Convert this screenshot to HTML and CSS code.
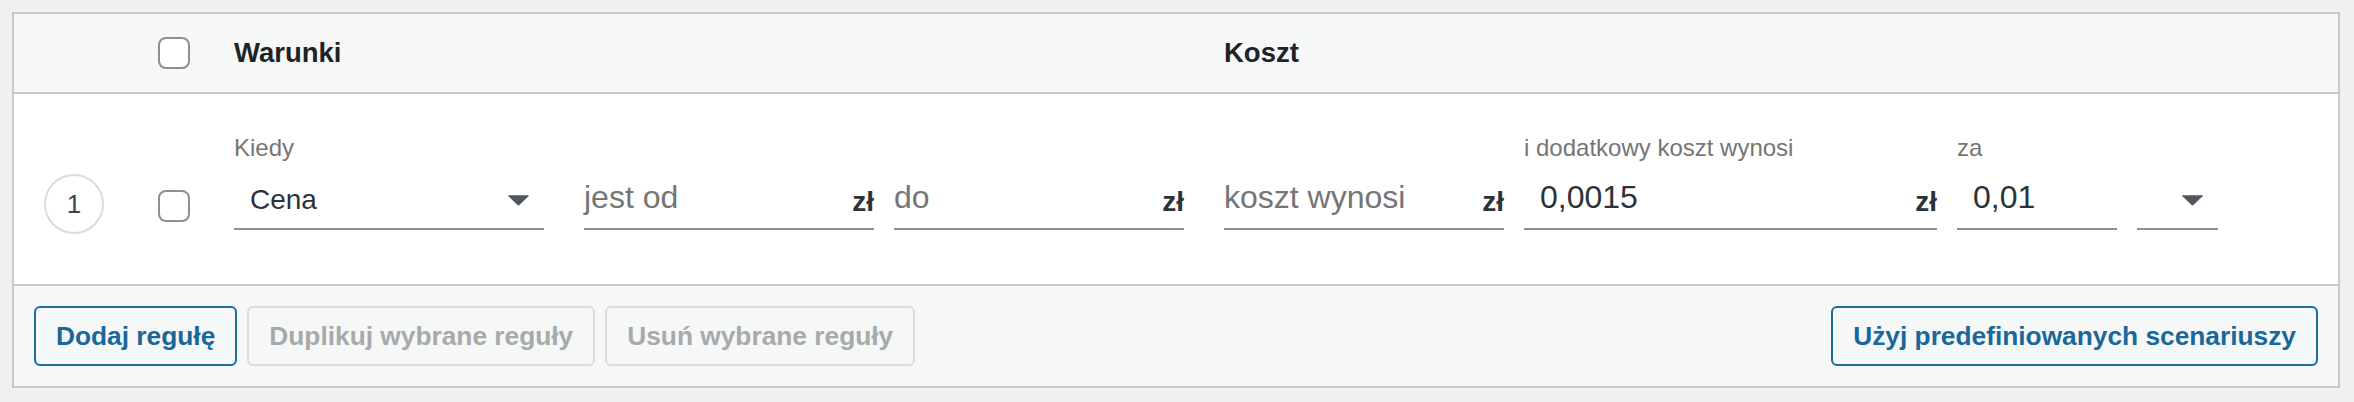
FILE: index.html
```html
<!DOCTYPE html>
<html lang="pl">
<head>
<meta charset="utf-8">
<title>Reguły</title>
<link rel="stylesheet" href="styles.css">
</head>
<body>
<div class="rules">
  <div class="thead">
    <div class="col-num"></div>
    <div class="col-check"><span class="checkbox"></span></div>
    <div class="th th-cond">Warunki</div>
    <div class="th">Koszt</div>
  </div>
  <div class="row">
    <div class="col-num"><span class="num">1</span></div>
    <div class="col-check"><span class="checkbox checkbox-row"></span></div>
    <div class="group group-cond">
      <div class="field w-310">
        <div class="field-label">Kiedy</div>
        <div class="control select"><span>Cena</span><svg class="arrow" width="23" height="12" viewBox="0 0 23 12"><path d="M2 1.2 H21 Q22.4 1.2 21.6 2.3 L12.4 11 Q11.5 11.8 10.6 11 L1.4 2.3 Q0.6 1.2 2 1.2 Z"/></svg></div>
      </div>
      <div class="group">
        <div class="field w-290">
          <div class="field-label"></div>
          <div class="control input"><span class="placeholder">jest od</span><span class="suffix">zł</span></div>
        </div>
        <div class="field w-290">
          <div class="field-label"></div>
          <div class="control input"><span class="placeholder">do</span><span class="suffix">zł</span></div>
        </div>
      </div>
    </div>
    <div class="group group-cost">
      <div class="field w-280">
        <div class="field-label"></div>
        <div class="control input"><span class="placeholder">koszt wynosi</span><span class="suffix">zł</span></div>
      </div>
      <div class="field w-413">
        <div class="field-label">i dodatkowy koszt wynosi</div>
        <div class="control input"><span class="value">0,0015</span><span class="suffix">zł</span></div>
      </div>
      <div class="field w-160">
        <div class="field-label">za</div>
        <div class="control input"><span class="value">0,01</span></div>
      </div>
      <div class="field w-81">
        <div class="field-label"></div>
        <div class="control select select-empty"><svg class="arrow" width="23" height="12" viewBox="0 0 23 12"><path d="M2 1.2 H21 Q22.4 1.2 21.6 2.3 L12.4 11 Q11.5 11.8 10.6 11 L1.4 2.3 Q0.6 1.2 2 1.2 Z"/></svg></div>
      </div>
    </div>
  </div>
  <div class="tfoot">
    <button class="btn btn-active" type="button">Dodaj regułę</button>
    <button class="btn" type="button" disabled>Duplikuj wybrane reguły</button>
    <button class="btn" type="button" disabled>Usuń wybrane reguły</button>
    <button class="btn btn-active btn-right" type="button">Użyj predefiniowanych scenariuszy</button>
  </div>
</div>
</body>
</html>
```
FILE: styles.css
```css
html, body {
  margin: 0;
  padding: 0;
}
body {
  background: #f0f0f1;
  font-family: "Liberation Sans", Arial, sans-serif;
  color: #2c3338;
}
.rules {
  margin: 12px 0 0 12px;
  width: 2328px;
  box-sizing: border-box;
  border: 2px solid #c8cbcd;
  background: #fff;
}
.thead {
  display: flex;
  align-items: center;
  height: 80px;
  box-sizing: border-box;
  background: #f6f7f7;
  border-bottom: 2px solid #c8cbcd;
}
.col-num {
  flex: none;
  width: 144px;
  box-sizing: border-box;
  padding-left: 30px;
}
.col-check {
  flex: none;
  width: 76px;
}
.checkbox {
  display: block;
  width: 32px;
  height: 32px;
  box-sizing: border-box;
  border: 2px solid #8c8f94;
  border-radius: 8px;
  background: #fff;
}
.th {
  font-size: 27.5px;
  font-weight: 700;
  color: #1d2327;
}
.th-cond {
  flex: none;
  width: 990px;
}
.row {
  display: flex;
  align-items: flex-start;
  height: 190px;
  box-sizing: border-box;
  padding: 38px 0 0;
  overflow: hidden;
}
.num {
  display: flex;
  align-items: center;
  justify-content: center;
  width: 60px;
  height: 60px;
  margin-top: 42px;
  box-sizing: border-box;
  border: 2px solid #dcdcde;
  border-radius: 50%;
  font-size: 26px;
  color: #3c434a;
}
.checkbox-row {
  margin-top: 58px;
}
.group {
  display: flex;
  gap: 20px;
}
.group-cond {
  gap: 40px;
}
.group-cost {
  margin-left: 40px;
}
.field {
  flex: none;
  display: flex;
  flex-direction: column;
}
.w-310 { width: 310px; }
.w-290 { width: 290px; }
.w-280 { width: 280px; }
.w-413 { width: 413px; }
.w-160 { width: 160px; }
.w-81 { width: 81px; }
.field-label {
  height: 32px;
  line-height: 32px;
  font-size: 24px;
  color: #757575;
  white-space: nowrap;
}
.control {
  display: flex;
  align-items: center;
  justify-content: space-between;
  height: 66px;
  box-sizing: border-box;
  border-bottom: 2px solid #8c8f94;
  white-space: nowrap;
}
.select {
  padding: 7px 14px 0 16px;
  font-size: 28px;
  line-height: 40px;
  color: #2c3338;
}
.select-empty {
  justify-content: flex-end;
}
.arrow {
  display: block;
  flex: none;
  fill: #50575e;
}
.input {
  padding-top: 1px;
  font-size: 32px;
  line-height: 40px;
}
.placeholder {
  color: #757575;
}
.value {
  padding-left: 16px;
  color: #2c3338;
}
.suffix {
  margin-top: 10px;
  font-size: 28px;
  font-weight: 700;
  color: #2c3338;
}
.tfoot {
  display: flex;
  align-items: center;
  gap: 10px;
  height: 102px;
  box-sizing: border-box;
  padding: 0 20px;
  background: #f6f7f7;
  border-top: 2px solid #c8cbcd;
}
.btn {
  height: 60px;
  margin: 0;
  padding: 0 20px;
  box-sizing: border-box;
  border: 2px solid #dcdcde;
  border-radius: 6px;
  background: #f6f7f7;
  font-family: "Liberation Sans", Arial, sans-serif;
  font-size: 26.3px;
  font-weight: 700;
  line-height: 56px;
  color: #a7aaad;
  white-space: nowrap;
}
.btn-active {
  border-color: #1d6c9f;
  color: #19689c;
}
.btn-right {
  margin-left: auto;
}
```
